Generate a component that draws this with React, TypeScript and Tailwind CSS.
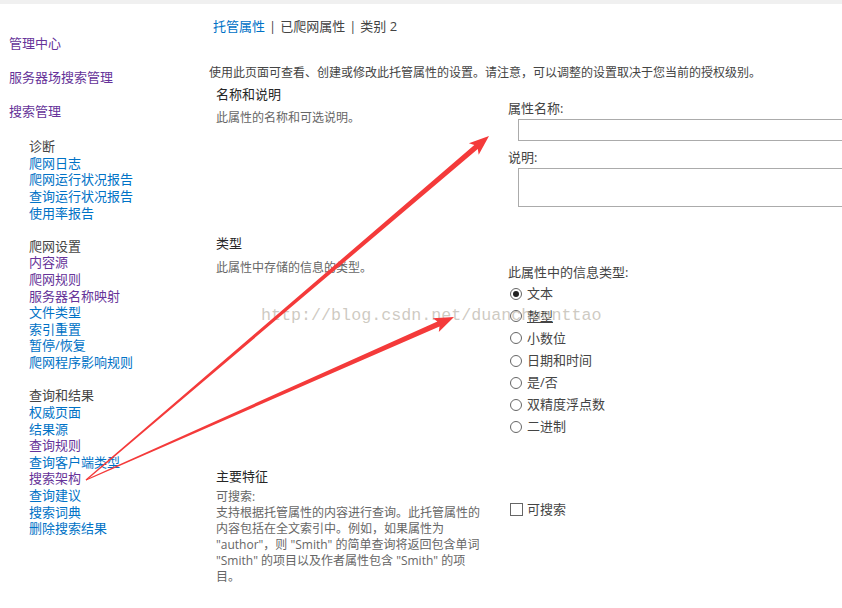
const font = { fontFamily: '"Open Sans", "Noto Sans CJK SC", sans-serif' };

type NavItem = { label: string; visited?: boolean };

const navGroups: { title: string; items: NavItem[] }[] = [
  {
    title: '诊断',
    items: [{ label: '爬网日志' }, { label: '爬网运行状况报告' }, { label: '查询运行状况报告' }, { label: '使用率报告' }],
  },
  {
    title: '爬网设置',
    items: [
      { label: '内容源', visited: true },
      { label: '爬网规则', visited: true },
      { label: '服务器名称映射', visited: true },
      { label: '文件类型' },
      { label: '索引重置' },
      { label: '暂停/恢复' },
      { label: '爬网程序影响规则' },
    ],
  },
  {
    title: '查询和结果',
    items: [
      { label: '权威页面' },
      { label: '结果源' },
      { label: '查询规则', visited: true },
      { label: '查询客户端类型' },
      { label: '搜索架构', visited: true },
      { label: '查询建议' },
      { label: '搜索词典' },
      { label: '删除搜索结果' },
    ],
  },
];

const types = ['文本', '整型', '小数位', '日期和时间', '是/否', '双精度浮点数', '二进制'];

function arrowPoints(sx: number, sy: number, tx: number, ty: number) {
  const dx = tx - sx;
  const dy = ty - sy;
  const len = Math.hypot(dx, dy);
  const ux = dx / len;
  const uy = dy / len;
  const nx = -uy;
  const ny = ux;
  const headLen = 17;
  const bx = tx - ux * headLen;
  const by = ty - uy * headLen;
  const cx = bx - ux * 3;
  const cy = by - uy * 3;
  const w0 = 0.6;
  const w1 = 2.7;
  const hw = 7.5;
  const pts = [
    [sx + nx * w0, sy + ny * w0],
    [bx + nx * w1, by + ny * w1],
    [cx + nx * hw, cy + ny * hw],
    [tx, ty],
    [cx - nx * hw, cy - ny * hw],
    [bx - nx * w1, by - ny * w1],
    [sx - nx * w0, sy - ny * w0],
  ];
  return pts.map((p) => `${p[0].toFixed(1)},${p[1].toFixed(1)}`).join(' ');
}

export default function App() {
  return (
    <div className="relative w-[842px] h-[608px] overflow-hidden bg-white" style={font}>
      <div className="h-[4px] bg-[#f0f0f0]" />

      <div className="flex">
        {/* left nav */}
        <div className="w-[209px] shrink-0 pl-[9px] pt-[29px] text-[13px]">
          <div className="leading-[20px] text-[#663399]">管理中心</div>
          <div className="leading-[20px] text-[#663399] mt-[14px]">服务器场搜索管理</div>
          <div className="leading-[20px] text-[#663399] mt-[14px]">搜索管理</div>

          <div className="pl-[20px] mt-[17px] leading-[16.62px]">
            {navGroups.map((g, gi) => (
              <div key={g.title} className={gi > 0 ? 'mt-[16.62px]' : ''}>
                <div className="text-[#444]">{g.title}</div>
                {g.items.map((it) => (
                  <div key={it.label} className={it.visited ? 'text-[#663399]' : 'text-[#0072c6]'}>
                    {it.label}
                  </div>
                ))}
              </div>
            ))}
          </div>
        </div>

        {/* main */}
        <div className="flex-1 min-w-0">
          <div className="mt-[12px] pl-[4px] text-[13px] leading-[20px] text-[#444]">
            <span className="text-[#0072c6]">托管属性</span>
            <span className="mx-[4px]">|</span>
            <span>已爬网属性</span>
            <span className="mx-[4px]">|</span>
            <span>类别 2</span>
          </div>

          <div className="mt-[28px] text-[12px] leading-[18px] text-[#444] whitespace-nowrap">
            使用此页面可查看、创建或修改此托管属性的设置。请注意，可以调整的设置取决于您当前的授权级别。
          </div>

          {/* name and description */}
          <div className="flex mt-[3px]">
            <div className="w-[299px] shrink-0 pl-[7px]">
              <div className="text-[13px] leading-[18px] text-[#262626]">名称和说明</div>
              <div className="mt-[6px] text-[12px] leading-[18px] text-[#666]">此属性的名称和可选说明。</div>
            </div>
            <div className="flex-1 pt-[14px] text-[13px] text-[#444]">
              <div className="leading-[18px]">属性名称:</div>
              <div className="mt-[2px] ml-[10px] h-[22px] border border-[#ababab] border-r-0" />
              <div className="mt-[7px] leading-[18px]">说明:</div>
              <div className="mt-[2px] ml-[10px] h-[39px] border border-[#ababab] border-r-0" />
            </div>
          </div>

          {/* type */}
          <div className="flex mt-[27px]">
            <div className="w-[299px] shrink-0 pl-[7px]">
              <div className="text-[13px] leading-[18px] text-[#262626]">类型</div>
              <div className="mt-[7px] text-[12px] leading-[18px] text-[#666]">此属性中存储的信息的类型。</div>
            </div>
            <div className="flex-1 pt-[29px] text-[13px] text-[#444]">
              <div className="leading-[18px]">此属性中的信息类型:</div>
              <div className="mt-[2px]">
                {types.map((t, i) => (
                  <div key={t} className="flex items-center h-[22.2px] pl-[2px]">
                    <span className="w-[12px] h-[12px] rounded-full border border-[#666] flex items-center justify-center bg-white">
                      {i === 0 && <span className="w-[6px] h-[6px] rounded-full bg-[#222]" />}
                    </span>
                    <span className={`ml-[5px] ${i === 1 ? 'underline' : ''}`}>{t}</span>
                  </div>
                ))}
              </div>
            </div>
          </div>

          {/* main characteristics */}
          <div className="flex mt-[29px]">
            <div className="w-[299px] shrink-0 pl-[7px]">
              <div className="text-[13px] leading-[18px] text-[#262626]">主要特征</div>
              <div className="mt-[4px] text-[12px] leading-[16px] text-[#666] whitespace-nowrap">
                可搜索:
                <br />
                支持根据托管属性的内容进行查询。此托管属性的
                <br />
                内容包括在全文索引中。例如，如果属性为
                <br />
                "author"，则 "Smith" 的简单查询将返回包含单词
                <br />
                "Smith" 的项目以及作者属性包含 "Smith" 的项
                <br />
                目。
              </div>
            </div>
            <div className="flex-1 pt-[33px] text-[13px] text-[#444]">
              <div className="flex items-center h-[18px] pl-[2px]">
                <span className="w-[13px] h-[13px] border border-[#666] bg-white" />
                <span className="ml-[4px]">可搜索</span>
              </div>
            </div>
          </div>
        </div>
      </div>

      {/* watermark */}
      <div
        className="absolute left-[261px] top-[304px] text-[16.7px] leading-[24px] text-[#b9b3a8]/70 pointer-events-none"
        style={{ fontFamily: '"Liberation Mono", monospace' }}
      >
        http://blog.csdn.net/duanchuanttao
      </div>

      {/* annotation arrows */}
      <svg className="absolute inset-0 pointer-events-none" width={842} height={608} viewBox="0 0 842 608">
        <polygon points={arrowPoints(86, 480, 489, 136)} fill="#f43a3a" />
        <polygon points={arrowPoints(86, 480, 454, 317)} fill="#f43a3a" />
      </svg>
    </div>
  );
}
